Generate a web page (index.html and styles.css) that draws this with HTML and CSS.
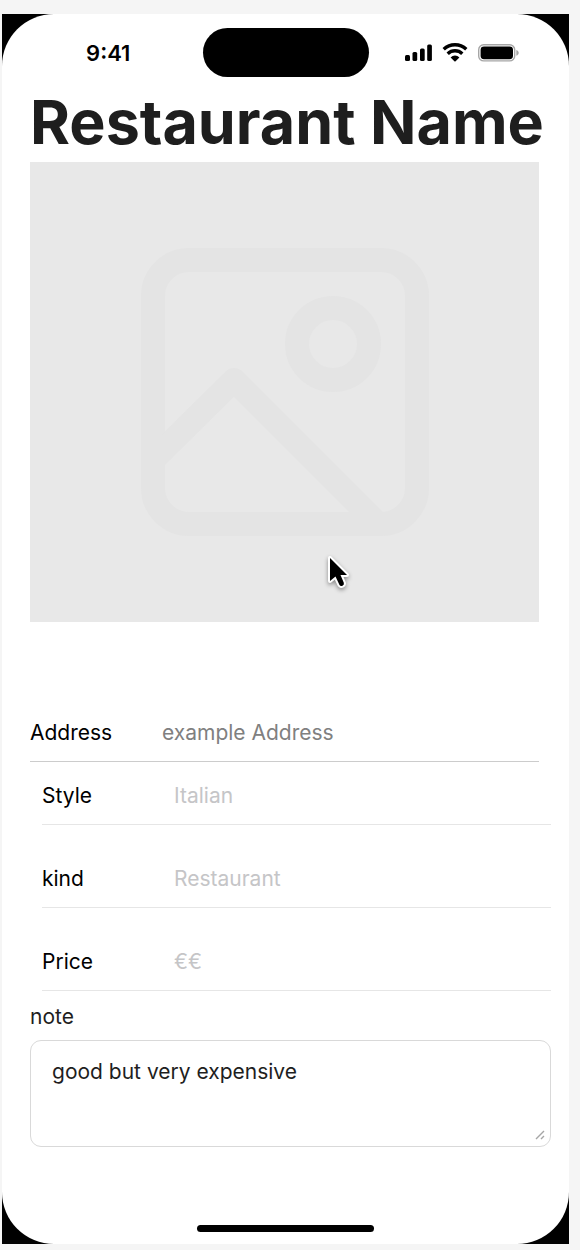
FILE: index.html
```html
<!DOCTYPE html>
<html lang="en">
<head>
    <meta charset="UTF-8">
    <meta name="viewport" content="width=device-width, initial-scale=1.0">
    <title>Restaurant Name</title>
    <link rel="stylesheet" href="styles.css">
</head>
<body>
    <div class="device">
        <div class="screen">
            <header class="status-bar">
                <time class="clock">9:41</time>
                <div class="island"></div>
                <div class="status-icons">
                    <svg class="icon-signal" width="27" height="18" viewBox="0 0 27 18">
                        <rect x="0" y="11" width="5" height="6" rx="1.5"/>
                        <rect x="7.5" y="8" width="4.7" height="9" rx="1.5"/>
                        <rect x="15" y="4.5" width="4.7" height="12.5" rx="1.5"/>
                        <rect x="22.2" y="0.5" width="4.7" height="16.5" rx="1.5"/>
                    </svg>
                    <svg class="icon-wifi" width="26" height="19" viewBox="0 0 26 19">
                        <path d="M1.7 6.3a16.4 16.4 0 0 1 22.6 0M5.7 10.7a10.6 10.6 0 0 1 14.6 0" fill="none" stroke="#000" stroke-width="3.4"/>
                        <path d="M8.6 14.4a6.3 6.3 0 0 1 8.8 0L13.6 18.2a.9.9 0 0 1-1.2 0z"/>
                    </svg>
                    <svg class="icon-battery" width="42" height="18" viewBox="0 0 42 18">
                        <rect x="0.7" y="0.7" width="36" height="16.2" rx="5" fill="none" stroke="#a6a6a6" stroke-width="1.4"/>
                        <rect x="2.6" y="2.4" width="32.4" height="12.8" rx="3.4"/>
                        <path d="M38.3 6v5.8c3.2-1.1 3.2-4.7 0-5.8z" fill="#a6a6a6"/>
                    </svg>
                </div>
            </header>

            <main class="content">
                <h1 class="title">Restaurant Name</h1>

                <div class="photo">
                    <svg class="photo-icon" width="288" height="288" viewBox="0 0 288 288">
                        <rect x="12" y="12" width="264" height="264" rx="36"/>
                        <circle cx="192" cy="96" r="36"/>
                        <path d="M12 212l81-80 144 144"/>
                    </svg>
                    <svg class="cursor" width="30" height="42" viewBox="0 0 30 42">
                        <path d="M5 5v23l5.500-4.500 4 8.500q1 1.500 3 .7 2-1 1.300-3L15.500 22H22z"/>
                    </svg>
                </div>

                <form class="details">
                    <div class="field field-address">
                        <label for="address">Address</label>
                        <input id="address" type="text" value="example Address">
                    </div>
                    <div class="field field-inset">
                        <label for="style">Style</label>
                        <input id="style" type="text" placeholder="Italian">
                    </div>
                    <div class="field field-inset">
                        <label for="kind">kind</label>
                        <input id="kind" type="text" placeholder="Restaurant">
                    </div>
                    <div class="field field-inset">
                        <label for="price">Price</label>
                        <input id="price" type="text" placeholder="€€">
                    </div>
                    <div class="note">
                        <label for="note">note</label>
                        <div class="note-box">
                            <textarea id="note">good but very expensive</textarea>
                            <svg class="grip" width="10" height="10" viewBox="0 0 10 10">
                                <path d="M1 9l8-8M6 9l3-3"/>
                            </svg>
                        </div>
                    </div>
                </form>
            </main>

            <div class="home-indicator"></div>
        </div>
    </div>
</body>
</html>
```
FILE: styles.css
```css
* {
    margin: 0;
    padding: 0;
    box-sizing: border-box;
}

body {
    font-family: 'Inter', 'Liberation Sans', sans-serif;
    background: #f5f5f5;
    color: #1e1e1e;
    min-height: 100vh;
    display: flex;
    padding: 14px 11px 6px 2px;
}

.device {
    flex: 1;
    min-width: 0;
    display: flex;
    background: #000000;
}

.screen {
    flex: 1;
    min-width: 0;
    display: flex;
    flex-direction: column;
    background: #ffffff;
    border-radius: 52px;
}

/* Status bar */
.status-bar {
    display: grid;
    grid-template-columns: 1fr 166px 1fr;
    align-items: center;
    justify-items: center;
    padding: 14px 12px 8px;
}

.clock {
    font-size: 22px;
    font-weight: 600;
    line-height: 24px;
    color: #000000;
}

.island {
    width: 100%;
    height: 49px;
    border-radius: 25px;
    background: #000000;
}

.status-icons {
    display: flex;
    align-items: center;
    gap: 10px;
}

/* Content */
.content {
    padding: 0 18px 0 28px;
}

.title {
    margin-bottom: 3px;
    font-size: 61px;
    font-weight: 700;
    line-height: 74px;
    white-space: nowrap;
}

.photo {
    position: relative;
    display: flex;
    align-items: center;
    justify-content: center;
    height: 460px;
    margin-right: 12px;
    background: #e8e8e8;
}

.photo-icon {
    fill: none;
    stroke: #e4e4e4;
    stroke-width: 24;
    stroke-linejoin: round;
}

.cursor {
    position: absolute;
    left: 295px;
    top: 391px;
    fill: #000000;
    stroke: #ffffff;
    stroke-width: 4;
    stroke-linejoin: round;
    paint-order: stroke;
    filter: drop-shadow(0 2px 2px rgba(0, 0, 0, 0.4));
}

/* Form */
.details {
    display: flex;
    flex-direction: column;
    margin-top: 82px;
}

.field {
    display: flex;
    align-items: center;
    height: 58px;
    font-size: 21px;
    color: #000000;
    border-bottom: 1px solid #e6e6e6;
}

.field label {
    width: 132px;
}

.field input {
    flex: 1;
    min-width: 0;
    font: inherit;
    color: #808080;
    background: none;
    border: none;
    outline: none;
}

.field input::placeholder {
    color: #c5c5c7;
    opacity: 1;
}

.field-address {
    margin-right: 12px;
    margin-bottom: 5px;
    border-color: #cccccc;
}

.field-inset {
    margin-left: 12px;
}

.field-inset + .field-inset {
    margin-top: 25px;
}

.note {
    display: flex;
    flex-direction: column;
    gap: 8px;
    margin-top: 11px;
    font-size: 21px;
    line-height: 30px;
}

.note-box {
    position: relative;
    display: flex;
}

.note textarea {
    flex: 1;
    min-width: 0;
    height: 107px;
    padding: 16px 21px;
    font: inherit;
    color: inherit;
    background: #ffffff;
    border: 1px solid #d9d9d9;
    border-radius: 11px;
    outline: none;
    resize: none;
}

.grip {
    position: absolute;
    right: 6px;
    bottom: 7px;
    fill: none;
    stroke: #a6a6a6;
    stroke-width: 1.4;
}

.home-indicator {
    width: 177px;
    height: 7px;
    margin: auto auto 12px;
    border-radius: 4px;
    background: #000000;
}
```
